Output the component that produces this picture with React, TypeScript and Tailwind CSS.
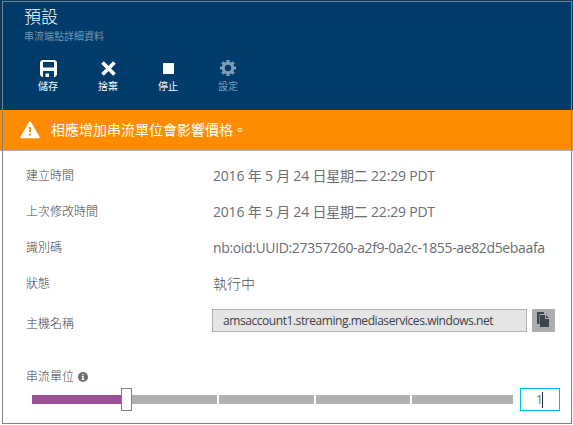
import type { ReactNode } from 'react';

const toolbar: { label: string; disabled?: boolean; icon: ReactNode }[] = [
  {
    label: '儲存',
    icon: (
      <svg width="17" height="17" viewBox="0 0 17 17" fill="currentColor">
        <path fillRule="evenodd" d="M2 0H15L17 2V15L15 17H14V11H3V17H2L0 15V2ZM3 2V7.5H14V2Z" />
        <path d="M5.5 13.5H9V17H5.5Z" />
      </svg>
    ),
  },
  {
    label: '捨棄',
    icon: (
      <svg width="15" height="15" viewBox="0 0 15 15" stroke="currentColor" strokeWidth="3.8">
        <path d="M1.5 1.5L13.5 13.5M13.5 1.5L1.5 13.5" />
      </svg>
    ),
  },
  { label: '停止', icon: <span className="block h-[11px] w-[11px] bg-white" /> },
  {
    label: '設定',
    disabled: true,
    icon: (
      <svg width="16" height="16" viewBox="-8 -8 16 16" fill="none" stroke="currentColor">
        <circle r="4.7" strokeWidth="3" />
        <path
          strokeWidth="3.2"
          d="M0-5V-8M0 5V8M-5 0H-8M5 0H8M3.8-3.8L5.7-5.7M-3.8-3.8L-5.7-5.7M3.8 3.8L5.7 5.7M-3.8 3.8L-5.7 5.7"
        />
      </svg>
    ),
  },
];

const rows = [
  { label: '建立時間', value: '2016 年 5 月 24 日星期二 22:29 PDT', style: 'tracking-[-0.2px]' },
  { label: '上次修改時間', value: '2016 年 5 月 24 日星期二 22:29 PDT', style: 'tracking-[-0.2px]' },
  { label: '識別碼', value: 'nb:oid:UUID:27357260-a2f9-0a2c-1855-ae82d5ebaafa', style: 'tracking-[-0.36px]' },
  { label: '狀態', value: '執行中', style: 'font-light text-[#4c4f54]' },
];

export default function App() {
  return (
    <div className="relative flex h-[425px] w-[573px] flex-col overflow-hidden whitespace-nowrap bg-white font-['Open_Sans','Noto_Sans_CJK_TC',sans-serif] text-[#6b6e73]">
      <header className="flex h-[110px] flex-col bg-[#003c6b] text-white">
        <h1 className="mt-[7px] pl-6 text-[17px] font-light leading-[20px]">預設</h1>
        <p className="mt-[2px] pl-6 text-[10px] leading-[14px] text-[#7894ae]">串流端點詳細資料</p>
        <nav className="mt-[15px] flex pl-[18px]">
          {toolbar.map((t) => (
            <button key={t.label} className={`flex w-[60px] flex-col items-center ${t.disabled ? 'text-[#7f9db5]' : 'text-white'}`}>
              <span className="flex h-5 items-center justify-center">{t.icon}</span>
              <span className="mt-[1px] text-[10px] leading-[14px]">{t.label}</span>
            </button>
          ))}
        </nav>
      </header>

      <div className="flex h-[41px] items-center border-b border-[#b3b3b3] bg-[#ff8c00] pl-5 text-white">
        <svg width="20" height="18" viewBox="0 0 20 18">
          <path d="M10 1L19 16.5H1Z" fill="white" stroke="white" strokeWidth="1.6" strokeLinejoin="round" />
          <path d="M9 6H11V11H9ZM9 12.5H11V14.5H9Z" fill="#ff8c00" />
        </svg>
        <span className="ml-[11px] text-[14px] leading-5">相應增加串流單位會影響價格。</span>
      </div>

      <dl className="pt-[7px]">
        {rows.map((r) => (
          <div key={r.label} className="flex h-9 items-center pl-[26px]">
            <dt className="w-[187px] text-[12px] font-light text-[#3f4247]">{r.label}</dt>
            <dd className={`pb-[2px] text-[14px] ${r.style}`}>{r.value}</dd>
          </div>
        ))}
      </dl>

      <div className="mt-[7px] flex h-[23px] items-center pl-[26px]">
        <span className="w-[186px] pt-[6px] text-[12px] font-light text-[#3f4247]">主機名稱</span>
        <div className="flex h-[23px] w-[315px] items-center border border-[#b1b1b1] bg-[#e5e5e5] pl-[10px] text-[12px] tracking-[-0.44px] text-[#3c3e48]">
          amsaccount1.streaming.mediaservices.windows.net
        </div>
        <button className="ml-[5px] flex h-[23px] w-[23px] items-start justify-start bg-[#adadad] pl-[5px] pt-[3px] text-[#3c4350]">
          <svg width="12" height="15" viewBox="0 0 12 15" fill="currentColor">
            <path d="M0 0H7V1H1V12H0Z" />
            <path d="M1 1H7V2H2.5V12H1Z" />
            <path d="M3 3H8V7H12V15H3ZM9 3L12 6H9Z" />
          </svg>
        </button>
      </div>

      <div className="mt-[37px] flex h-4 items-center pl-[26px] text-[12px] font-light text-[#3f4247]">
        <span>串流單位</span>
        <svg className="mb-px ml-1" width="10" height="10" viewBox="0 0 9 9">
          <circle cx="4.5" cy="4.5" r="4.5" fill="#6b6e73" />
          <path d="M3.8 1.7H5.2V3H3.8ZM3.3 3.7H5.2V6.5H5.8V7.3H3.2V6.5H3.8V4.5H3.3Z" fill="white" />
        </svg>
      </div>

      <div className="mt-[3px] flex h-[23px] items-center pl-8">
        <div className="h-[9px] w-[89px] bg-[#9b4f96]" />
        <div className="h-[23px] w-[11px] border border-[#7f7f7f] bg-white" />
        <div className="flex h-[9px] gap-[2px]">
          <i className="w-[85px] bg-[#b1b1b1]" />
          <i className="w-[95px] bg-[#b1b1b1]" />
          <i className="w-[94px] bg-[#b1b1b1]" />
          <i className="w-[101px] bg-[#b1b1b1]" />
        </div>
        <div className="ml-[7px] flex h-[23px] w-10 items-center border border-[#00b7ee] pl-[15px] text-[12px]">
          <span>1</span>
          <span className="-ml-px h-4 w-px bg-[#222]" />
        </div>
      </div>

      <div className="pointer-events-none absolute bottom-[1px] left-[2px] right-[1px] top-[1px] border border-[#7f7f7f]" />
    </div>
  );
}
